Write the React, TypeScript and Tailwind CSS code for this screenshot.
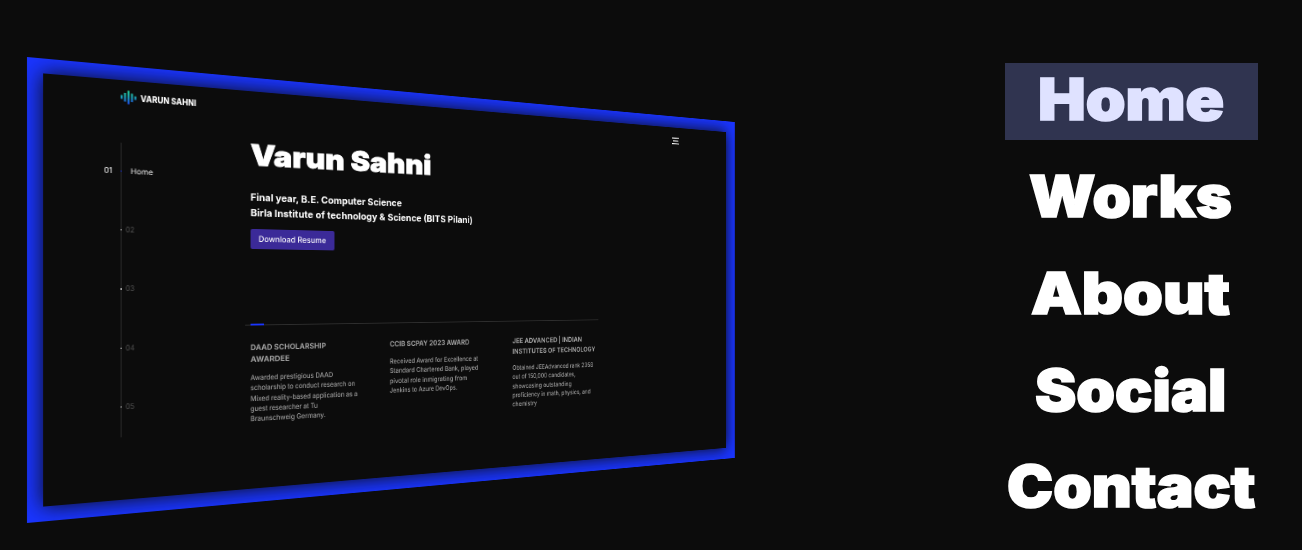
import { useLayoutEffect, useRef, useState, type ReactNode } from "react";

type FitProps = { width: number; className?: string; children: ReactNode };

/* A single line of text stretched to an exact measure. */
function Fit({ width, className = "", children }: FitProps) {
  const ref = useRef<HTMLSpanElement>(null);
  const [scale, setScale] = useState(1);
  useLayoutEffect(() => {
    if (ref.current) setScale(width / ref.current.offsetWidth);
  }, [width]);
  return (
    <span className={`block ${className}`} style={{ width }}>
      <span ref={ref} className="inline-block origin-left whitespace-nowrap" style={{ transform: `scaleX(${scale})` }}>
        {children}
      </span>
    </span>
  );
}

type Line = [string, number];

const awards: { title: Line[]; body: Line[] }[] = [
  {
    title: [["DAAD SCHOLARSHIP", 87], ["AWARDEE", 44]],
    body: [
      ["Awarded prestigious DAAD", 95],
      ["scholarship to conduct research on", 122],
      ["Mixed reality-based application as a", 125],
      ["guest researcher at Tu", 77],
      ["Braunschweig Germany.", 86],
    ],
  },
  {
    title: [["CCIB SCPAY 2023 AWARD", 104]],
    body: [
      ["Received Award for Excellence at", 116],
      ["Standard Chartered Bank, played", 116],
      ["pivotal role inmigrating from", 101],
      ["Jenkins to Azure DevOps.", 88],
    ],
  },
  {
    title: [["JEE ADVANCED | INDIAN", 102], ["INSTITUTES OF TECHNOLOGY", 122]],
    body: [
      ["Obtained JEEAdvanced rank 2358", 119],
      ["out of 150,000 candidates,", 92],
      ["showcasing outstanding", 86],
      ["proficiency in math, physics, and", 115],
      ["chemistry", 35],
    ],
  },
];

const links: Line[] = [["Home", 186], ["Works", 203], ["About", 199], ["Social", 191], ["Contact", 248]];
const steps = ["01", "02", "03", "04", "05"];

function Logo() {
  return (
    <svg className="h-[15px] w-[16px]" viewBox="0 0 16 15">
      <defs>
        <linearGradient id="bars" gradientUnits="userSpaceOnUse" x1="0" y1="0" x2="0" y2="15">
          <stop offset="0" stopColor="#24dc9a" />
          <stop offset="0.5" stopColor="#1c9fb8" />
          <stop offset="1" stopColor="#1b45f5" />
        </linearGradient>
      </defs>
      <g stroke="url(#bars)" strokeWidth="2" fill="none">
        <path d="M1 5.4V9.6M4.4 3V12M7.9 .4V14.6M11.4 3.2V12M14.8 5.7V9.6" />
      </g>
    </svg>
  );
}

function Preview() {
  return (
    <div className="ml-[27px] mt-[57px] h-[466px] w-[909px] shrink-0 origin-top-left bg-[#1a35ff] p-[15px] [transform:matrix3d(1.08,0.0992,0,0.000426,0,1,0,0,0,0,1,0,0,0,0,1)]">
      <div className="flex h-full w-full flex-col bg-[#0c0c0c] shadow-[0_0_20px_0_#0c0c0c]">
        <header className="flex h-[35px] items-center pl-[75px] pr-[81px]">
          <Logo />
          <Fit width={58} className="ml-[4px] text-[9.5px] leading-[12px] font-extrabold">VARUN SAHNI</Fit>
          <svg className="ml-auto h-[10px] w-[12px]" viewBox="0 0 12 10" stroke="white" strokeWidth="1.3">
            <path d="M0 1.2H12M2 4.8H10.5M0 8.6H12" />
          </svg>
        </header>
        <div className="flex flex-1">
          <aside className="mt-[30px] flex h-[306px] w-[212px] pt-[24px]">
            <div className="flex w-[75px] flex-col items-end pr-[8.5px]">
              <Fit width={8} className="text-[8px] leading-[10px]">01</Fit>
            </div>
            <div className="-mt-[24px] flex h-[306px] w-px flex-col items-center gap-[60px] bg-[#292929] pt-[29px]">
              {steps.map((s, i) => (
                <div key={s} className={`h-[1.2px] w-[1.2px] shrink-0 ${i === 0 ? "bg-[#1a35ff]" : "bg-white"}`} />
              ))}
            </div>
            <div className="flex flex-col gap-[51.2px]">
              {steps.map((s, i) =>
                i === 0 ? (
                  <Fit key={s} width={22.5} className="ml-[8.5px] text-[8px] leading-[10px]">Home</Fit>
                ) : (
                  <Fit key={s} width={9} className="ml-[4px] text-[8px] leading-[10px] text-[#555]">{s}</Fit>
                ),
              )}
            </div>
          </aside>
          <main className="flex flex-col pt-[15px]">
            <h1>
              <Fit width={219} className="text-[31.5px] leading-[40px] font-black [-webkit-text-stroke:0.8px_white]">Varun Sahni</Fit>
            </h1>
            <div className="mt-[18px] text-[11px] leading-[16.5px] font-bold">
              <Fit width={180}>Final year, B.E. Computer Science</Fit>
              <Fit width={274}>Birla Institute of technology &amp; Science (BITS Pilani)</Fit>
            </div>
            <button className="mt-[9.5px] flex h-[22px] w-[96.5px] items-center justify-center rounded-[2px] bg-[#3b2a98]">
              <Fit width={78} className="text-[9px] leading-[12px] font-medium">Download Resume</Fit>
            </button>
            <div className="-ml-[6px] mt-[82.5px] flex h-[2px] w-[462px] items-center bg-[linear-gradient(#2e2e2e,#2e2e2e)] bg-[length:100%_1px] bg-center bg-no-repeat pl-[6px]">
              <div className="h-[2px] w-[15px] bg-[#1a35ff]" />
            </div>
            <div className="mt-[18px] flex text-[#a0a0a0]">
              {awards.map((a) => (
                <section key={a.title[0][0]} className="w-[164.5px]">
                  <h2 className="text-[8.5px] leading-[13px] font-bold">
                    {a.title.map(([t, w]) => <Fit key={t} width={w}>{t}</Fit>)}
                  </h2>
                  <div className="mt-[8px] text-[8px] leading-[11.3px] font-medium">
                    {a.body.map(([t, w]) => <Fit key={t} width={w}>{t}</Fit>)}
                  </div>
                </section>
              ))}
            </div>
          </main>
        </div>
      </div>
    </div>
  );
}

export default function App() {
  return (
    <div className="flex h-[550px] w-full items-start overflow-hidden bg-[#0c0c0c] font-['Inter',sans-serif] text-white">
      <Preview />
      <nav className="ml-[69.25px] mt-[63px] flex w-[253px] shrink-0 flex-col gap-[20.25px]">
        {links.map(([t, w], i) => (
          <a
            key={t}
            className={`flex h-[76.5px] items-center justify-center pb-[4px] pr-[2px] text-[57.5px] leading-[72px] font-black ${
              i === 0
                ? "bg-[#303450] text-[#dfe2ff] [-webkit-text-stroke:1.6px_#dfe2ff]"
                : "[-webkit-text-stroke:1.6px_white]"
            }`}
          >
            <Fit width={w}>{t}</Fit>
          </a>
        ))}
      </nav>
    </div>
  );
}
